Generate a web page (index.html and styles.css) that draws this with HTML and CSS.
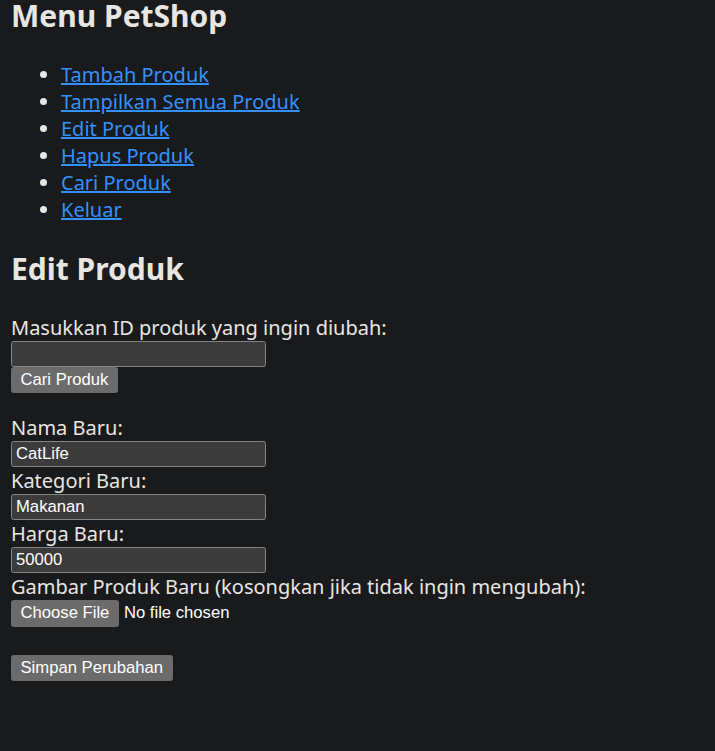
FILE: index.html
```html
<!DOCTYPE html>
<html lang="id">
<head>
<meta charset="utf-8">
<title>Menu PetShop</title>
<link rel="stylesheet" href="styles.css">
</head>
<body>
<h2 class="title">Menu PetShop</h2>
<ul class="menu">
  <li><a href="#">Tambah Produk</a></li>
  <li><a href="#">Tampilkan Semua Produk</a></li>
  <li><a href="#">Edit Produk</a></li>
  <li><a href="#">Hapus Produk</a></li>
  <li><a href="#">Cari Produk</a></li>
  <li><a href="#">Keluar</a></li>
</ul>
<h2>Edit Produk</h2>
<form class="search-form">
  <label class="field-label" for="pid">Masukkan ID produk yang ingin diubah:</label>
  <input class="text-input" id="pid" type="text">
  <button class="btn" type="button">Cari Produk</button>
</form>
<form class="edit-form">
  <label class="field-label" for="nama">Nama Baru:</label>
  <input class="text-input" id="nama" type="text" value="CatLife">
  <label class="field-label" for="kat">Kategori Baru:</label>
  <input class="text-input" id="kat" type="text" value="Makanan">
  <label class="field-label" for="harga">Harga Baru:</label>
  <input class="text-input" id="harga" type="text" value="50000">
  <label class="field-label">Gambar Produk Baru (kosongkan jika tidak ingin mengubah):</label>
  <div class="file-row">
    <span class="btn file-btn">Choose File</span>
    <span class="file-name">No file chosen</span>
  </div>
  <button class="btn save-btn" type="button">Simpan Perubahan</button>
</form>
</body>
</html>
```
FILE: styles.css
```css
html {
  background: #181a1b;
}
body {
  margin: 0;
  padding: 0 11px;
  background: #181a1b;
  color: #e8e6e3;
  font-family: "Noto Sans", "Open Sans", sans-serif;
  font-size: 20px;
  line-height: normal;
}
h2 {
  font-size: 30px;
  font-weight: 700;
  margin: 25px 0;
  line-height: normal;
}
.title {
  margin-top: -5.5px;
}
.menu {
  margin: 20px 0;
  padding-left: 50px;
}
.menu a {
  color: #3391ff;
  text-decoration: underline;
}
.search-form,
.edit-form {
  display: flex;
  flex-direction: column;
  align-items: flex-start;
  margin: 0;
}
.field-label {
  display: block;
  line-height: normal;
}
.text-input {
  box-sizing: border-box;
  width: 255px;
  height: 26px;
  margin: 0;
  padding: 1px 4px;
  background: #3b3b3b;
  border: 1px solid #858585;
  border-radius: 2.5px;
  color: #ffffff;
  font-family: "Liberation Sans", Arial, sans-serif;
  font-size: 16.67px;
}
.btn {
  box-sizing: border-box;
  display: inline-flex;
  align-items: center;
  height: 26.5px;
  padding: 0 9.5px;
  margin: 0;
  background: #6b6b6b;
  border: none;
  border-radius: 3px;
  color: #ffffff;
  font-family: "Liberation Sans", Arial, sans-serif;
  font-size: 16.67px;
}
.search-form .btn {
  margin-bottom: 21px;
}
.file-row {
  display: flex;
  align-items: center;
  gap: 5px;
  height: 26.5px;
}
.file-name {
  font-family: "Liberation Sans", Arial, sans-serif;
  font-size: 16.67px;
  color: #ffffff;
}
.save-btn {
  margin-top: 28px;
}
```
